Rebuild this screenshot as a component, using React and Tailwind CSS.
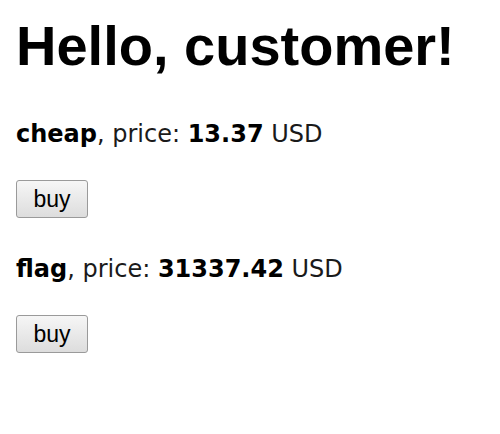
import React from 'react';

function Item({ name, price }) {
  return (
    <div className="flex flex-col items-start">
      <p className="text-[24px] leading-[24px] text-[#1a1a1a]">
        <b className="font-bold text-black">{name}</b>, price: <b className="font-bold text-black">{price}</b> USD
      </p>
      <button
        type="button"
        className="mt-[34px] w-[72px] h-[38px] border border-[#9a9a9a] rounded-[3px] bg-gradient-to-b from-[#f6f6f6] to-[#dddddd] text-[23px] leading-none text-black font-['Liberation_Sans',sans-serif]"
      >
        buy
      </button>
    </div>
  );
}

export default function App() {
  return (
    <div className="w-[500px] h-[434px] bg-white px-4 pt-[18px] font-['DejaVu_Sans',sans-serif]">
      <h1 className="text-[56px] leading-none font-bold text-black font-['Liberation_Sans',sans-serif]">
        Hello, customer!
      </h1>
      <div className="mt-[48px] flex flex-col gap-[39px]">
        <Item name="cheap" price="13.37" />
        <Item name="flag" price="31337.42" />
      </div>
    </div>
  );
}
